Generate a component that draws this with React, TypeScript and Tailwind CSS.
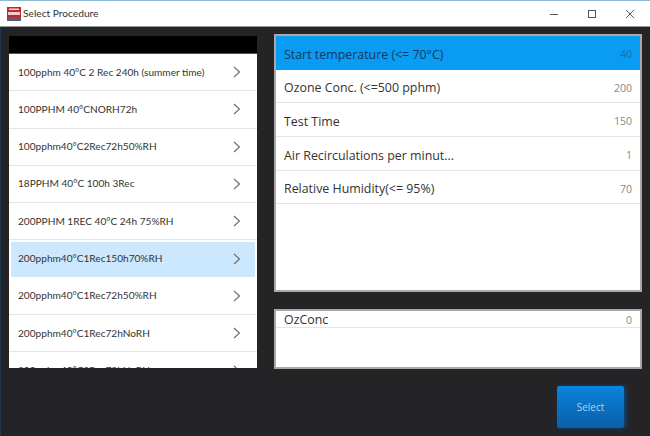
const procedures = [
  "100pphm 40°C 2 Rec 240h (summer time)",
  "100PPHM 40°CNORH72h",
  "100pphm40°C2Rec72h50%RH",
  "18PPHM 40°C 100h 3Rec",
  "200PPHM 1REC 40°C 24h 75%RH",
  "200pphm40°C1Rec150h70%RH",
  "200pphm40°C1Rec72h50%RH",
  "200pphm40°C1Rec72hNoRH",
  "200pphm40°C2Rec72hNoRH",
];

const settings = [
  { label: "Start temperature (<= 70°C)", value: "40" },
  { label: "Ozone Conc. (<=500 pphm)", value: "200" },
  { label: "Test Time", value: "150" },
  { label: "Air Recirculations per minut...", value: "1" },
  { label: "Relative Humidity(<= 95%)", value: "70" },
];

function Chevron() {
  return (
    <svg width="8" height="12" viewBox="0 0 8 12" fill="none" stroke="#6b6b6b" strokeWidth="1.1" className="shrink-0">
      <path d="M1 1l5.5 5L1 11" />
    </svg>
  );
}

function TitleBar() {
  return (
    <div className="h-[27px] shrink-0 bg-white border-t border-[#8fb8d8] border-b border-b-[#9a9a9a] flex items-center pl-[7px] text-[#333]">
      <svg width="14" height="14" viewBox="0 0 14 14" className="shrink-0">
        <rect width="14" height="14" fill="#c9252b" />
        <rect x="2" y="1.5" width="10" height="1.5" fill="#f4d9d9" />
        <rect x="1" y="5" width="12" height="3" fill="#f4c9c9" />
        <rect y="10" width="14" height="4" fill="#5b5b78" />
      </svg>
      <span className="ml-[2px] pt-[1px] text-[10.2px] font-['Lato','Open_Sans',sans-serif]">Select Procedure</span>
      <div className="ml-auto flex items-center">
        <svg width="10" height="10" viewBox="0 0 10 10" stroke="#555" fill="none" className="mr-[28px]">
          <path d="M1 5.5h8" />
        </svg>
        <svg width="10" height="10" viewBox="0 0 10 10" stroke="#555" fill="none" className="mr-[28px]">
          <rect x="1.5" y="1.5" width="7" height="7" />
        </svg>
        <svg width="10" height="10" viewBox="0 0 10 10" stroke="#555" fill="none" className="mr-[15px]">
          <path d="M1 1l8 8M9 1l-8 8" />
        </svg>
      </div>
    </div>
  );
}

export default function App() {
  return (
    <div className="w-[650px] h-[436px] overflow-hidden bg-[#242326] flex flex-col font-['Open_Sans','Liberation_Sans',sans-serif]">
      <TitleBar />
      <div className="flex-1 flex pl-[8px] pt-[9px] border-l border-l-[#1c3a52]">
        <div className="w-[248px] h-[332px] flex flex-col overflow-hidden bg-white">
          <div className="h-[18px] shrink-0 bg-black border-b border-b-[#555]" />
          {procedures.map((name, i) => (
            <div
              key={name}
              className={`shrink-0 flex items-center justify-between text-[10.1px] text-[#333] font-['Lato','Open_Sans',sans-serif] border-b ${
                i === 5
                  ? "h-[35px] my-[1.15px] ml-[2px] mr-[2px] pl-[7px] pr-[14px] bg-[#cce8ff] border-[#cce8ff]"
                  : "h-[37.3px] pl-[9px] pr-[16px] border-[#e4e4e4]"
              }`}
            >
              <span>{name}</span>
              <Chevron />
            </div>
          ))}
        </div>
        <div className="w-[368px] ml-[17px] flex flex-col">
          <div className="h-[258px] -mt-[2px] bg-white border-2 border-[#a9a9a9] flex flex-col">
            {settings.map((s, i) => (
              <div
                key={s.label}
                className={`h-[33.7px] shrink-0 flex items-center justify-between px-[8px] pt-[5px] border-b ${
                  i === 0 ? "bg-[#0a9bf2] border-[#0a9bf2] text-[#123a5c]" : "border-[#e4e4e4] text-[#333]"
                }`}
              >
                <span className="text-[12.4px]">{s.label}</span>
                <span className={`text-[10.5px] ${i === 0 ? "text-[#1670a8]" : "text-[#888]"}`}>{s.value}</span>
              </div>
            ))}
          </div>
          <div className="h-[60px] mt-[17px] bg-white border-2 border-[#a9a9a9]">
            <div className="h-[17px] flex items-center justify-between px-[8px] pt-[3px] border-b border-[#e4e4e4] text-[#333]">
              <span className="text-[12.4px]">OzConc</span>
              <span className="text-[10.5px] text-[#888]">0</span>
            </div>
          </div>
          <div className="flex justify-end mt-[17px] pr-[18px]">
            <button className="w-[67px] h-[42px] rounded-[2px] bg-gradient-to-b from-[#0a84dc] to-[#0b5fa8] text-[10px] text-[#a9d4f5] shadow-[2px_0_4px_#0b4a80]">
              Select
            </button>
          </div>
        </div>
      </div>
    </div>
  );
}
